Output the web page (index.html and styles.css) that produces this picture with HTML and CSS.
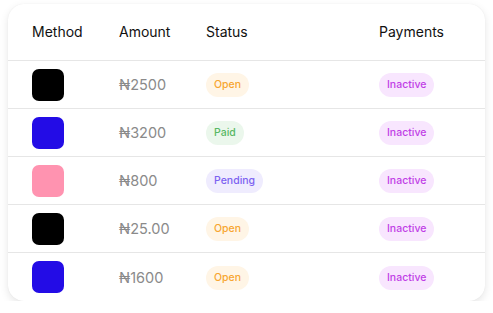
FILE: index.html
```html
<!DOCTYPE html>
<html>
<head>
<meta charset="utf-8">
<link rel="stylesheet" href="styles.css">
</head>
<body>
<div class="card">
  <div class="row head">
    <div>Method</div><div>Amount</div><div>Status</div><div>Payments</div>
  </div>
  <div class="row">
    <div><span class="sw black"></span></div><div class="amt">₦2500</div>
    <div><span class="badge open">Open</span></div><div><span class="badge inactive">Inactive</span></div>
  </div>
  <div class="row">
    <div><span class="sw blue"></span></div><div class="amt">₦3200</div>
    <div><span class="badge paid">Paid</span></div><div><span class="badge inactive">Inactive</span></div>
  </div>
  <div class="row">
    <div><span class="sw pink"></span></div><div class="amt">₦800</div>
    <div><span class="badge pending">Pending</span></div><div><span class="badge inactive">Inactive</span></div>
  </div>
  <div class="row">
    <div><span class="sw black"></span></div><div class="amt">₦25.00</div>
    <div><span class="badge open">Open</span></div><div><span class="badge inactive">Inactive</span></div>
  </div>
  <div class="row last">
    <div><span class="sw blue"></span></div><div class="amt">₦1600</div>
    <div><span class="badge open">Open</span></div><div><span class="badge inactive">Inactive</span></div>
  </div>
</div>
</body>
</html>
```
FILE: styles.css
```css
html, body { margin: 0; padding: 0; background: #fff; }
body {
  font-family: Inter, "Noto Sans", sans-serif;
  padding: 4px 8px 0 8px;
}
.card {
  width: 477px;
  box-sizing: border-box;
  background: #fff;
  border-radius: 16px;
  box-shadow: 0 3px 8px rgba(0,0,0,0.10), 0 0 1px rgba(0,0,0,0.08);
  overflow: hidden;
}
.row {
  display: grid;
  grid-template-columns: 87px 87px 173px 1fr;
  align-items: center;
  padding: 0 24px;
  height: 48px;
  border-bottom: 1px solid #e6e6e6;
  box-sizing: border-box;
}
.row.last { border-bottom: none; }
.row.head {
  height: 57px;
  font-size: 14px;
  color: #111;
  padding-bottom: 2px;
}
.sw {
  display: block;
  width: 32px;
  height: 32px;
  border-radius: 7px;
}
.black { background: #000; }
.blue { background: #230ce6; }
.pink { background: #ff93b0; }
.amt {
  font-size: 14.5px;
  color: #8a8a8a;
}
.badge {
  display: inline-block;
  height: 24px;
  line-height: 24px;
  padding: 0 8px;
  border-radius: 12px;
  font-size: 10.5px;
  font-weight: 500;
}
.open { background: #fff5e6; color: #f7a531; }
.paid { background: #ebf7ec; color: #58b864; }
.pending { background: #efecfe; color: #7c62f1; }
.inactive { background: #f8e6fe; color: #c03ee6; }
```
